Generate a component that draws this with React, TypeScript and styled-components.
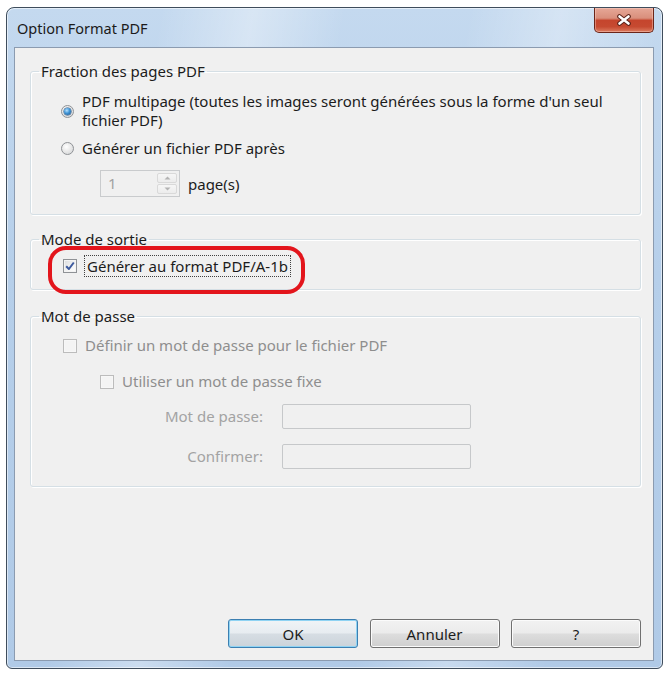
import React from "react";
import styled, { createGlobalStyle } from "styled-components";

const Global = createGlobalStyle`
  html, body { margin: 0; padding: 0; background: #ffffff; }
  body {
    font-family: "Noto Sans", "Open Sans", "Liberation Sans", sans-serif;
    font-size: 15px;
    color: #1c1c1c;
  }
  * { box-sizing: border-box; }
`;

const Page = styled.div`
  padding: 7px 0 0 6px;
`;

const Window = styled.div`
  width: 657px;
  height: 662px;
  border: 1px solid #3f4d5c;
  border-radius: 8px 8px 6px 6px;
  background:
    linear-gradient(100deg, rgba(255,255,255,0) 20%, rgba(255,255,255,0.35) 32%, rgba(255,255,255,0) 44%, rgba(255,255,255,0) 60%, rgba(255,255,255,0.3) 72%, rgba(255,255,255,0) 85%),
    linear-gradient(180deg, #c4d9ef 0%, #b6cfea 40%, #b0cae7 100%);
  box-shadow: inset 0 0 0 1px rgba(255,255,255,0.55);
  display: flex;
  flex-direction: column;
  padding: 0 8px 7px 7px;
`;

const TitleBar = styled.div`
  height: 39px;
  display: flex;
  align-items: flex-start;
  justify-content: space-between;
`;

const Title = styled.div`
  margin: 10px 0 0 3px;
  font-size: 14.5px;
  line-height: 20px;
  color: #1b1b1b;
`;

const CloseButton = styled.div`
  width: 60px;
  height: 25px;
  border: 1px solid #6b2519;
  border-top: none;
  border-radius: 0 0 5px 5px;
  background: linear-gradient(180deg, #e6a797 0%, #d98f7c 42%, #c5452d 52%, #c64a31 78%, #dc7c60 100%);
  box-shadow: inset 0 0 0 1px rgba(255,220,210,0.4);
  display: flex;
  align-items: center;
  justify-content: center;
`;

const Client = styled.div`
  flex: 1;
  border: 1px solid #8b9bb0;
  background: #f0f0f0;
  display: flex;
  flex-direction: column;
  padding: 13px 12px 12px 15px;
`;

const Group = styled.fieldset<{ $gapTop?: number }>`
  margin: ${(p) => p.$gapTop ?? 0}px 0 0 0;
  padding: 0 12px 0 8px;
  border: 1px solid #d5dfe5;
  border-radius: 3px;
  box-shadow: inset 1px 1px 0 #ffffff, 1px 1px 0 #ffffff;
  min-inline-size: 0;
`;

const Legend = styled.legend`
  padding: 0 2px;
  line-height: 20px;
  font-size: 15px;
  color: #1c1c1c;
`;

const Body = styled.div<{ $pt: number; $pb: number; $pl: number }>`
  display: flex;
  flex-direction: column;
  align-items: flex-start;
  padding: ${(p) => p.$pt}px 0 ${(p) => p.$pb}px ${(p) => p.$pl}px;
`;

const OptionRow = styled.div<{ $mt?: number; $indent?: number; $disabled?: boolean }>`
  display: flex;
  align-items: center;
  gap: 8px;
  margin-top: ${(p) => p.$mt ?? 0}px;
  margin-left: ${(p) => p.$indent ?? 0}px;
  line-height: 19px;
  color: ${(p) => (p.$disabled ? "#8e8e8e" : "#1c1c1c")};
`;

const RadioOuter = styled.span`
  width: 13px;
  height: 13px;
  flex: none;
  border-radius: 50%;
  border: 1px solid #8f9296;
  background: radial-gradient(circle at 40% 35%, #ffffff 0%, #eaeaea 45%, #cfd1d3 100%);
  display: flex;
  align-items: center;
  justify-content: center;
`;

const RadioDot = styled.span`
  width: 7px;
  height: 7px;
  border-radius: 50%;
  background: radial-gradient(circle at 40% 35%, #b7e2ff 0%, #3f94d6 45%, #1a4f86 100%);
  box-shadow: 0 0 0 0.5px #214e7a;
`;

const CheckBox = styled.span<{ $disabled?: boolean }>`
  width: 14px;
  height: 14px;
  flex: none;
  border: 1px solid ${(p) => (p.$disabled ? "#bcbcbc" : "#8f9296")};
  background: ${(p) =>
    p.$disabled
      ? "#f4f4f4"
      : "linear-gradient(135deg, #d9dbde 0%, #f2f2f2 55%, #ffffff 100%)"};
  box-shadow: inset 0 0 0 1px ${(p) => (p.$disabled ? "#f7f7f7" : "#f3f3f3")};
  display: flex;
  align-items: center;
  justify-content: center;
`;

const FocusLabel = styled.span`
  padding: 1px 2px;
  line-height: 18px;
  outline: 1px dotted #404040;
  outline-offset: 0;
`;

const Highlight = styled.div`
  position: relative;
`;

const Ring = styled.div`
  position: absolute;
  top: -10px;
  left: -15px;
  right: -15px;
  bottom: -18px;
  border: 4px solid #e3151c;
  border-radius: 18px;
  pointer-events: none;
`;

const Lines = styled.span`
  display: flex;
  flex-direction: column;
`;

const SpinRow = styled.div`
  display: flex;
  align-items: center;
  gap: 8px;
  margin: 12px 0 0 39px;
`;

const SpinBox = styled.div`
  width: 80px;
  height: 27px;
  border: 1px solid #c9cbcd;
  background: #f0f0f0;
  display: flex;
  align-items: stretch;
  padding: 2px 2px 2px 0;
`;

const SpinValue = styled.span`
  flex: 1;
  padding-left: 7px;
  line-height: 21px;
  color: #a2a2a2;
`;

const SpinButtons = styled.div`
  width: 20px;
  display: flex;
  flex-direction: column;
  gap: 1px;
`;

const SpinBtn = styled.div`
  flex: 1;
  border: 1px solid #d9d9d9;
  border-radius: 2px;
  background: linear-gradient(180deg, #f6f6f6, #ececec);
  display: flex;
  align-items: center;
  justify-content: center;
`;

const FormGrid = styled.div`
  display: grid;
  grid-template-columns: 200px 189px;
  column-gap: 19px;
  row-gap: 15px;
  margin-top: 13px;
  align-items: center;
`;

const FieldLabel = styled.span`
  text-align: right;
  color: #a3a3a3;
  line-height: 19px;
`;

const TextInput = styled.div`
  height: 25px;
  border: 1px solid #c6c8ca;
  border-radius: 2px;
  background: #f0f0f0;
`;

const Spacer = styled.div`
  flex: 1;
`;

const ButtonRow = styled.div`
  display: flex;
  justify-content: flex-end;
  gap: 11.5px;
`;

const Button = styled.div<{ $default?: boolean }>`
  width: 130px;
  height: 29px;
  border: 1px solid ${(p) => (p.$default ? "#3c7fb1" : "#707070")};
  border-radius: 3px;
  background: ${(p) =>
    p.$default
      ? "linear-gradient(180deg, #f0f4f7 0%, #e7ecf0 48%, #d6dde3 52%, #cbd3da 100%)"
      : "linear-gradient(180deg, #f2f2f2 0%, #ebebeb 48%, #dddddd 52%, #cfcfcf 100%)"};
  box-shadow: inset 0 0 0 1px ${(p) => (p.$default ? "#8fd3f3" : "#fbfbfb")};
  display: flex;
  align-items: center;
  justify-content: center;
  font-size: 15px;
  color: #1c1c1c;
`;

const Arrow = ({ up }: { up?: boolean }) => (
  <svg width="7" height="4" viewBox="0 0 7 4">
    <path d={up ? "M0.5 3.5 L3.5 0.5 L6.5 3.5 Z" : "M0.5 0.5 L3.5 3.5 L6.5 0.5 Z"} fill="#b3b3b3" />
  </svg>
);

const CloseIcon = () => (
  <svg width="16" height="12" viewBox="0 0 16 12">
    <path d="M3.5 2.5 L12.5 9.5 M12.5 2.5 L3.5 9.5" stroke="#5a2218" strokeWidth="4.6" strokeLinecap="round" />
    <path d="M3.5 2.5 L12.5 9.5 M12.5 2.5 L3.5 9.5" stroke="#ffffff" strokeWidth="2.6" strokeLinecap="round" />
  </svg>
);

const CheckMark = () => (
  <svg width="10" height="10" viewBox="0 0 10 10">
    <path d="M1.2 5.2 L3.9 8 L8.8 1.5" fill="none" stroke="#3d5a9e" strokeWidth="2" strokeLinejoin="round" />
  </svg>
);

export default function App() {
  return (
    <>
      <Global />
      <Page>
        <Window>
          <TitleBar>
            <Title>Option Format PDF</Title>
            <CloseButton>
              <CloseIcon />
            </CloseButton>
          </TitleBar>
          <Client>
            <Group>
              <Legend>Fraction des pages PDF</Legend>
              <Body $pt={11} $pb={17} $pl={22}>
                <OptionRow>
                  <RadioOuter>
                    <RadioDot />
                  </RadioOuter>
                  <Lines>
                    <span>PDF multipage (toutes les images seront générées sous la forme d'un seul</span>
                    <span>fichier PDF)</span>
                  </Lines>
                </OptionRow>
                <OptionRow $mt={9}>
                  <RadioOuter />
                  <span>Générer un fichier PDF après</span>
                </OptionRow>
                <SpinRow>
                  <SpinBox>
                    <SpinValue>1</SpinValue>
                    <SpinButtons>
                      <SpinBtn>
                        <Arrow up />
                      </SpinBtn>
                      <SpinBtn>
                        <Arrow />
                      </SpinBtn>
                    </SpinButtons>
                  </SpinBox>
                  <span>page(s)</span>
                </SpinRow>
              </Body>
            </Group>

            <Group $gapTop={14}>
              <Legend>Mode de sortie</Legend>
              <Body $pt={7} $pb={13} $pl={24}>
                <Highlight>
                  <OptionRow>
                    <CheckBox>
                      <CheckMark />
                    </CheckBox>
                    <FocusLabel>Générer au format PDF/A-1b</FocusLabel>
                  </OptionRow>
                  <Ring />
                </Highlight>
              </Body>
            </Group>

            <Group $gapTop={16}>
              <Legend>Mot de passe</Legend>
              <Body $pt={10} $pb={17} $pl={24}>
                <OptionRow $disabled>
                  <CheckBox $disabled />
                  <span>Définir un mot de passe pour le fichier PDF</span>
                </OptionRow>
                <OptionRow $disabled $mt={17} $indent={37}>
                  <CheckBox $disabled />
                  <span>Utiliser un mot de passe fixe</span>
                </OptionRow>
                <FormGrid>
                  <FieldLabel>Mot de passe:</FieldLabel>
                  <TextInput />
                  <FieldLabel>Confirmer:</FieldLabel>
                  <TextInput />
                </FormGrid>
              </Body>
            </Group>

            <Spacer />
            <ButtonRow>
              <Button $default>OK</Button>
              <Button>Annuler</Button>
              <Button>?</Button>
            </ButtonRow>
          </Client>
        </Window>
      </Page>
    </>
  );
}
